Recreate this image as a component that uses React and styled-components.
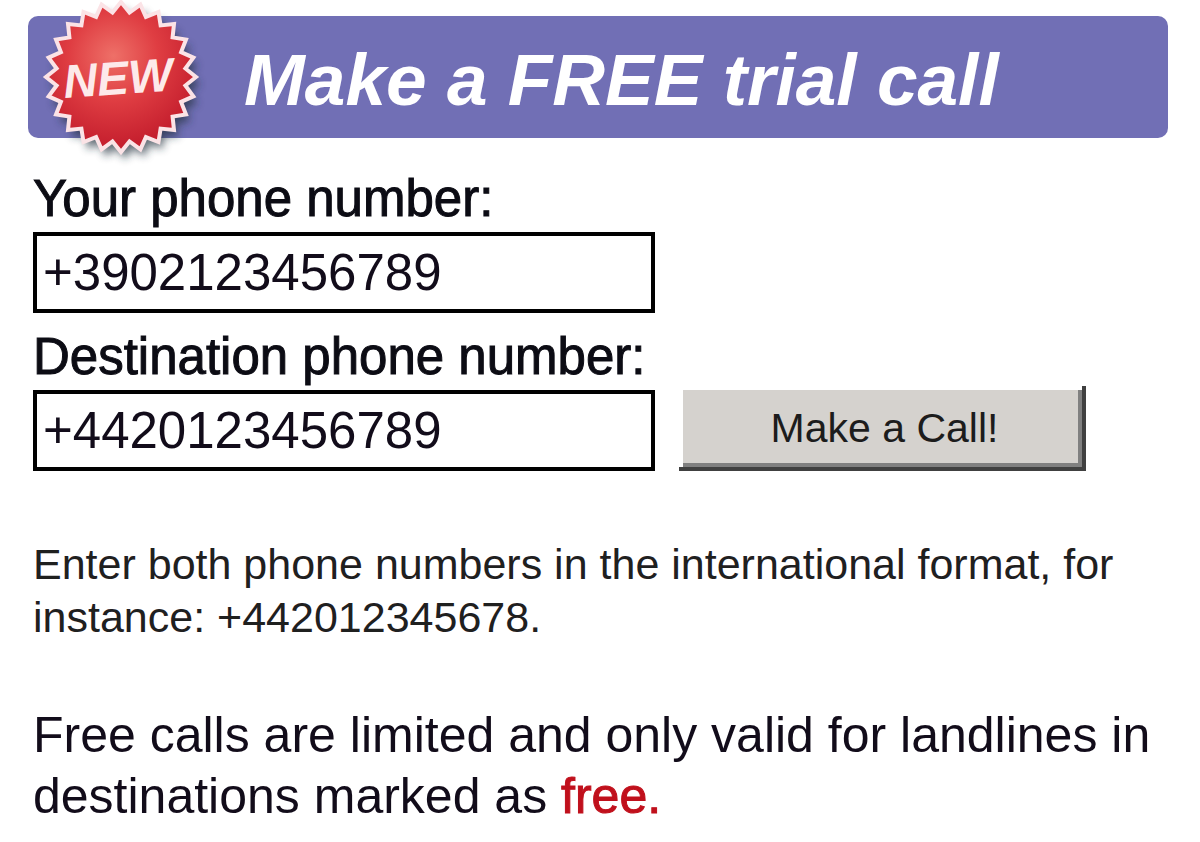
import React, { useState } from "react";
import styled, { createGlobalStyle } from "styled-components";

const GlobalStyle = createGlobalStyle`
  *, *::before, *::after { box-sizing: border-box; }
  body {
    margin: 0;
    background: #fff;
    color: #120c1a;
    font-family: "Liberation Sans", Arial, Helvetica, sans-serif;
  }
`;

const Page = styled.main`
  padding: 16px 32px 20px 28px;
`;

const Banner = styled.header`
  position: relative;
  display: flex;
  align-items: center;
  min-height: 122px;
  padding: 6px 32px 0 216px;
  border-radius: 10px;
  background: #716fb5;
`;

const Title = styled.h1`
  margin: 0;
  color: #fff;
  font-size: 73px;
  font-style: italic;
  line-height: 80px;
`;

const Badge = styled.svg`
  position: absolute;
  left: 4px;
  top: -16px;
  width: 180px;
  height: 180px;
`;

const Form = styled.form`
  display: flex;
  flex-direction: column;
  padding: 31px 0 0 5px;
`;

const Label = styled.label`
  padding-bottom: 3px;
  font-size: 51px;
  line-height: 60px;
  color: #0c0c14;
  -webkit-text-stroke: 1px currentColor;
`;

const FieldRow = styled.div`
  display: flex;
  align-items: flex-end;
  flex-wrap: wrap;
  gap: 24px;
  margin-bottom: ${(p) => p.$after}px;
`;

const PhoneInput = styled.input`
  width: 622px;
  max-width: 100%;
  height: 81px;
  padding: 0 6px;
  border: 4px solid #000;
  border-radius: 0;
  outline: 0;
  background: #fff;
  color: #120c1a;
  font: 51px "Liberation Sans", Arial, sans-serif;
`;

const CallButton = styled.button`
  width: 407px;
  height: 85px;
  margin-top: -4px;
  padding: 0 8px 0 12px;
  border: 0;
  background: #d5d2ce;
  box-shadow: inset -4px -4px #404040, inset 4px 4px #fff, inset -8px -8px #808080;
  color: #1c1c1c;
  font: 41px "Liberation Sans", Arial, sans-serif;
`;

const Note = styled.p`
  margin: 0 0 61px;
  font-size: 43px;
  line-height: 53px;
  color: #1f201f;
`;

const Limits = styled.p`
  margin: 0;
  font-size: 50px;
  line-height: 61px;
`;

const Free = styled.strong`
  color: #c0101c;
  font-weight: normal;
  -webkit-text-stroke: 1px currentColor;
`;

const SPIKES = 24;
const burst = Array.from({ length: SPIKES * 2 }, (_, i) => {
  const angle = (Math.PI * i) / SPIKES;
  const r = i % 2 ? 65 : 75;
  return `${(89 + r * Math.cos(angle)).toFixed(1)},${(77 + r * Math.sin(angle)).toFixed(1)}`;
}).join(" ");

function NewBadge() {
  return (
    <Badge viewBox="0 0 180 180" role="img" aria-label="New">
      <defs>
        <radialGradient id="seal" cx="45%" cy="36%" r="60%">
          <stop offset="0" stopColor="#ee7068" />
          <stop offset="0.5" stopColor="#df3d42" />
          <stop offset="1" stopColor="#c51f2e" />
        </radialGradient>
        <filter id="cast" x="-20%" y="-20%" width="140%" height="140%">
          <feGaussianBlur stdDeviation="4" />
        </filter>
      </defs>
      <polygon points={burst} fill="#20303c" opacity="0.7" filter="url(#cast)" transform="translate(4 7)" />
      <polygon points={burst} fill="url(#seal)" stroke="#fbe3e6" strokeWidth="4" />
      <text x="86" y="94" textAnchor="middle" fill="#fdeaea" fontSize="47" fontWeight="bold" fontStyle="italic" transform="rotate(-4 90 78)">
        NEW
      </text>
    </Badge>
  );
}

export default function App() {
  const [source, setSource] = useState("+3902123456789");
  const [destination, setDestination] = useState("+4420123456789");

  return (
    <>
      <GlobalStyle />
      <Page>
        <Banner>
          <NewBadge />
          <Title>Make a FREE trial call</Title>
        </Banner>
        <Form onSubmit={(e) => e.preventDefault()}>
          <Label htmlFor="source">Your phone number:</Label>
          <FieldRow $after={14}>
            <PhoneInput id="source" type="tel" value={source} onChange={(e) => setSource(e.target.value)} />
          </FieldRow>
          <Label htmlFor="destination">Destination phone number:</Label>
          <FieldRow $after={67}>
            <PhoneInput id="destination" type="tel" value={destination} onChange={(e) => setDestination(e.target.value)} />
            <CallButton type="submit">Make a Call!</CallButton>
          </FieldRow>
          <Note>Enter both phone numbers in the international format, for instance: +442012345678.</Note>
          <Limits>
            Free calls are limited and only valid for landlines in destinations marked as <Free>free.</Free>
          </Limits>
        </Form>
      </Page>
    </>
  );
}
